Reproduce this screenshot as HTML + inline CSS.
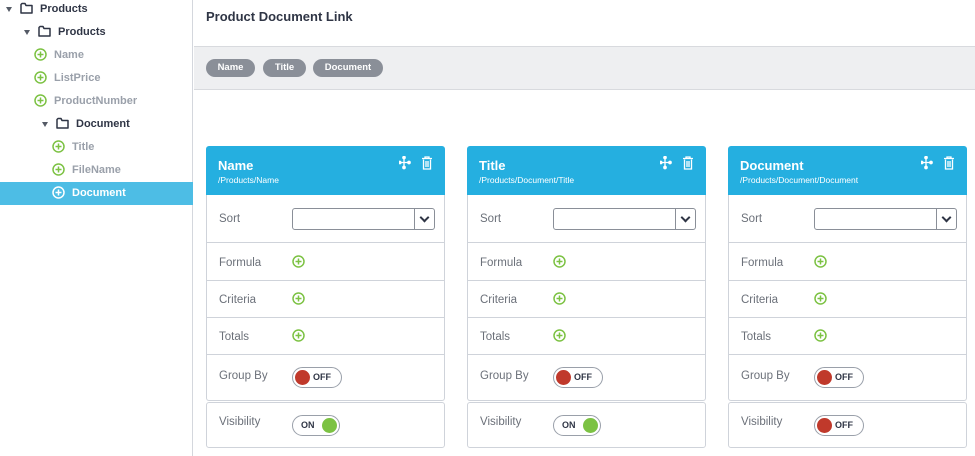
<!DOCTYPE html><html><head><style>
*{box-sizing:border-box;margin:0;padding:0}
body{width:975px;height:456px;overflow:hidden;background:#fff;font-family:"Liberation Sans",sans-serif;position:relative}
.left{position:absolute;left:0;top:0;width:193px;height:456px;border-right:1px solid #d4d7dd}
.ti{position:absolute;height:23px;line-height:23px;font-size:11px;font-weight:bold;white-space:nowrap}
.ti.f{color:#2f3545}.ti.g{color:#9aa0aa}
.ti svg{vertical-align:middle;position:relative;top:-1px;margin-right:7px}
.arr{display:inline-block;width:0;height:0;border-left:3px solid transparent;border-right:3px solid transparent;border-top:5px solid #555b66;vertical-align:middle;margin-right:8px}
.sel{position:absolute;left:0;top:182px;width:193px;height:23px;background:#4dbde5}
.title{position:absolute;left:206px;top:9px;font-size:13px;font-weight:bold;color:#2f3545}
.bar{position:absolute;left:194px;top:46px;width:781px;height:44px;background:#eeeff1;border-top:1px solid #d8dade;border-bottom:1px solid #d8dade}
.pill{position:absolute;top:59px;height:18px;line-height:18px;border-radius:9px;background:#8a8f98;color:#fff;font-size:9.5px;font-weight:bold;text-align:center}
.card{position:absolute;width:239px}
.hd{height:49px;background:#25afe0;border-radius:3px 3px 0 0;color:#fff;padding:12px 12px}
.hd b{font-size:13px;display:block}
.hd s{text-decoration:none;font-size:8.5px;display:block;margin-top:2px}
.body{border:1px solid #cfd3da;border-top:none;border-radius:0 0 3px 3px}
.row{border-top:1px solid #cfd3da;position:relative;font-size:11.5px;color:#6b7079}
.row:first-child{border-top:none}
.row span{position:absolute;left:12px;margin-top:2px}
.row svg.p{position:absolute;left:85px}
.vis{margin-top:1px;border:1px solid #cfd3da;border-radius:3px;height:46px;position:relative;font-size:11.5px;color:#6b7079}
.sel2{position:absolute;left:85px;top:13px;width:143px;height:22px;border:1px solid #8a8f98;border-radius:3px;background:#fff}
.sel2 i{position:absolute;right:0;top:0;width:20px;height:20px;border-left:1px solid #8a8f98}
.sel2 i:after{content:"";position:absolute;left:6px;top:5px;width:5px;height:5px;border-right:2px solid #2f3545;border-bottom:2px solid #2f3545;transform:rotate(45deg)}
.tg{position:absolute;left:85px;width:50px;height:21px;border:1.5px solid #9aa0aa;border-radius:11px;font-size:9px;font-weight:bold;color:#2f3545}
.tg span{margin-top:0 !important}
.tg .k{position:absolute;top:2px;width:15px;height:15px;border-radius:50%}
.icons{position:absolute;right:12px;top:10px}
</style></head><body>
<svg width="0" height="0" style="position:absolute"><defs>
<symbol id="pl" viewBox="0 0 13 13"><circle cx="6.5" cy="6.5" r="5.5" fill="none" stroke="currentColor" stroke-width="1.5"/><path d="M6.5 3.5v6M3.5 6.5h6" stroke="currentColor" stroke-width="1.5"/></symbol>
<symbol id="fd" viewBox="0 0 13 12"><path d="M1 2.5V11h11V3.5H6L5 1.5H2z" fill="none" stroke="#2f3545" stroke-width="1.5" stroke-linejoin="round"/></symbol>
</defs></svg>
<div class="left">
<div class="sel"></div>
<div class="ti f" style="left:6px;top:-2px"><span class="arr"></span><svg width="13" height="12"><use href="#fd"/></svg>Products</div>
<div class="ti f" style="left:24px;top:21px"><span class="arr"></span><svg width="13" height="12"><use href="#fd"/></svg>Products</div>
<div class="ti g" style="left:34px;top:44px"><svg width="13" height="13" style="color:#7cc243"><use href="#pl"/></svg>Name</div>
<div class="ti g" style="left:34px;top:67px"><svg width="13" height="13" style="color:#7cc243"><use href="#pl"/></svg>ListPrice</div>
<div class="ti g" style="left:34px;top:90px"><svg width="13" height="13" style="color:#7cc243"><use href="#pl"/></svg>ProductNumber</div>
<div class="ti f" style="left:42px;top:113px"><span class="arr"></span><svg width="13" height="12"><use href="#fd"/></svg>Document</div>
<div class="ti g" style="left:52px;top:136px"><svg width="13" height="13" style="color:#7cc243"><use href="#pl"/></svg>Title</div>
<div class="ti g" style="left:52px;top:159px"><svg width="13" height="13" style="color:#7cc243"><use href="#pl"/></svg>FileName</div>
<div class="ti" style="left:52px;top:182px;color:#fff"><svg width="13" height="13" style="color:#fff"><use href="#pl"/></svg>Document</div>
</div>
<div class="title">Product Document Link</div>
<div class="bar"></div>
<div class="pill" style="left:206px;width:49px">Name</div>
<div class="pill" style="left:263px;width:43px">Title</div>
<div class="pill" style="left:313px;width:70px">Document</div>

<div class="card" style="left:206px;top:146px">
<div class="hd" style="position:relative"><b>Name</b><s>/Products/Name</s>
<svg class="icons" width="34" height="14" viewBox="0 0 34 14" fill="none" stroke="#fff" stroke-width="1.3"><path d="M5 1v11M0 6.5h11"/><circle cx="5" cy="1.5" r="1.2" fill="#fff"/><circle cx="5" cy="11.5" r="1.2" fill="#fff"/><circle cx="0.8" cy="6.5" r="1.2" fill="#fff"/><circle cx="10" cy="6.5" r="1.2" fill="#fff"/><path d="M23 2.5h10M26 2.5V1h4v1.5M24.5 3.5v9.5h7V3.5M27 5v6M29 5v6"/></svg></div>
<div class="body">
<div class="row" style="height:47px"><span style="top:16px">Sort</span><div class="sel2"><i></i></div></div>
<div class="row" style="height:38px"><span style="top:12px">Formula</span><svg class="p" width="13" height="13" style="top:12px;color:#7cc243"><use href="#pl"/></svg></div>
<div class="row" style="height:37px"><span style="top:11px">Criteria</span><svg class="p" width="13" height="13" style="top:11px;color:#7cc243"><use href="#pl"/></svg></div>
<div class="row" style="height:37px"><span style="top:11px">Totals</span><svg class="p" width="13" height="13" style="top:11px;color:#7cc243"><use href="#pl"/></svg></div>
<div class="row" style="height:46px"><span style="top:13px">Group By</span><div class="tg" style="top:12px"><div class="k" style="left:2px;background:#c0392b"></div><span style="left:20px;top:4px;color:#2f3545">OFF</span></div></div>
</div>
<div class="vis"><span style="position:absolute;left:12px;top:13px">Visibility</span><div class="tg" style="top:12px;width:48px"><span style="position:absolute;left:8px;top:4px;color:#2f3545">ON</span><div class="k" style="right:2px;background:#7cc243"></div></div></div>
</div>

<div class="card" style="left:467px;top:146px">
<div class="hd" style="position:relative"><b>Title</b><s>/Products/Document/Title</s>
<svg class="icons" width="34" height="14" viewBox="0 0 34 14" fill="none" stroke="#fff" stroke-width="1.3"><path d="M5 1v11M0 6.5h11"/><circle cx="5" cy="1.5" r="1.2" fill="#fff"/><circle cx="5" cy="11.5" r="1.2" fill="#fff"/><circle cx="0.8" cy="6.5" r="1.2" fill="#fff"/><circle cx="10" cy="6.5" r="1.2" fill="#fff"/><path d="M23 2.5h10M26 2.5V1h4v1.5M24.5 3.5v9.5h7V3.5M27 5v6M29 5v6"/></svg></div>
<div class="body">
<div class="row" style="height:47px"><span style="top:16px">Sort</span><div class="sel2"><i></i></div></div>
<div class="row" style="height:38px"><span style="top:12px">Formula</span><svg class="p" width="13" height="13" style="top:12px;color:#7cc243"><use href="#pl"/></svg></div>
<div class="row" style="height:37px"><span style="top:11px">Criteria</span><svg class="p" width="13" height="13" style="top:11px;color:#7cc243"><use href="#pl"/></svg></div>
<div class="row" style="height:37px"><span style="top:11px">Totals</span><svg class="p" width="13" height="13" style="top:11px;color:#7cc243"><use href="#pl"/></svg></div>
<div class="row" style="height:46px"><span style="top:13px">Group By</span><div class="tg" style="top:12px"><div class="k" style="left:2px;background:#c0392b"></div><span style="left:20px;top:4px;color:#2f3545">OFF</span></div></div>
</div>
<div class="vis"><span style="position:absolute;left:12px;top:13px">Visibility</span><div class="tg" style="top:12px;width:48px"><span style="position:absolute;left:8px;top:4px;color:#2f3545">ON</span><div class="k" style="right:2px;background:#7cc243"></div></div></div>
</div>

<div class="card" style="left:728px;top:146px">
<div class="hd" style="position:relative"><b>Document</b><s>/Products/Document/Document</s>
<svg class="icons" width="34" height="14" viewBox="0 0 34 14" fill="none" stroke="#fff" stroke-width="1.3"><path d="M5 1v11M0 6.5h11"/><circle cx="5" cy="1.5" r="1.2" fill="#fff"/><circle cx="5" cy="11.5" r="1.2" fill="#fff"/><circle cx="0.8" cy="6.5" r="1.2" fill="#fff"/><circle cx="10" cy="6.5" r="1.2" fill="#fff"/><path d="M23 2.5h10M26 2.5V1h4v1.5M24.5 3.5v9.5h7V3.5M27 5v6M29 5v6"/></svg></div>
<div class="body">
<div class="row" style="height:47px"><span style="top:16px">Sort</span><div class="sel2"><i></i></div></div>
<div class="row" style="height:38px"><span style="top:12px">Formula</span><svg class="p" width="13" height="13" style="top:12px;color:#7cc243"><use href="#pl"/></svg></div>
<div class="row" style="height:37px"><span style="top:11px">Criteria</span><svg class="p" width="13" height="13" style="top:11px;color:#7cc243"><use href="#pl"/></svg></div>
<div class="row" style="height:37px"><span style="top:11px">Totals</span><svg class="p" width="13" height="13" style="top:11px;color:#7cc243"><use href="#pl"/></svg></div>
<div class="row" style="height:46px"><span style="top:13px">Group By</span><div class="tg" style="top:12px"><div class="k" style="left:2px;background:#c0392b"></div><span style="left:20px;top:4px;color:#2f3545">OFF</span></div></div>
</div>
<div class="vis"><span style="position:absolute;left:12px;top:13px">Visibility</span><div class="tg" style="top:12px"><div class="k" style="left:2px;background:#c0392b"></div><span style="position:absolute;left:20px;top:4px;color:#2f3545">OFF</span></div></div>
</div>
</body></html>
